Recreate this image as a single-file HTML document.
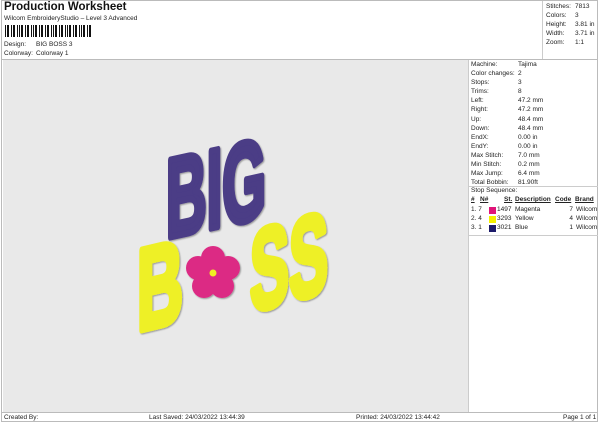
<!DOCTYPE html>
<html><head><style>
body{margin:0;width:600px;height:424px;background:#fff;font-family:"Liberation Sans",sans-serif;font-size:6.5px;color:#222;position:relative;overflow:hidden}
.a{position:absolute;white-space:nowrap}
.r{position:absolute;line-height:9.1px;white-space:nowrap}
</style></head><body>
<div class="a" style="left:1px;top:0;width:597px;height:422px;border:1px solid #bbb;box-sizing:border-box"></div>
<div class="a" style="left:4px;top:1px;font-size:11.5px;font-weight:bold;color:#111">Production Worksheet</div>
<div class="a" style="left:4px;top:15px">Wilcom EmbroideryStudio – Level 3 Advanced</div>
<svg class="a" style="left:5px;top:25px" width="86" height="12"><g fill="#111">
<rect x="0" y="0" width="1" height="12"/><rect x="2" width="2" height="12"/><rect x="6" width="1" height="12"/><rect x="8" width="2" height="12"/><rect x="12" width="1" height="12"/><rect x="14" width="1" height="12"/><rect x="16" width="2" height="12"/><rect x="20" width="1" height="12"/><rect x="22" width="2" height="12"/><rect x="26" width="1" height="12"/><rect x="28" width="1" height="12"/><rect x="30" width="2" height="12"/><rect x="34" width="1" height="12"/><rect x="36" width="2" height="12"/><rect x="40" width="1" height="12"/><rect x="42" width="2" height="12"/><rect x="46" width="1" height="12"/><rect x="48" width="1" height="12"/><rect x="50" width="2" height="12"/><rect x="54" width="1" height="12"/><rect x="56" width="2" height="12"/><rect x="60" width="1" height="12"/><rect x="62" width="1" height="12"/><rect x="64" width="2" height="12"/><rect x="68" width="1" height="12"/><rect x="70" width="2" height="12"/><rect x="74" width="1" height="12"/><rect x="76" width="1" height="12"/><rect x="78" width="2" height="12"/><rect x="82" width="1" height="12"/><rect x="84" width="2" height="12"/></g></svg>
<div class="a" style="left:4px;top:41px">Design:</div><div class="a" style="left:36px;top:41px">BIG BOSS 3</div>
<div class="a" style="left:4px;top:50px">Colorway:</div><div class="a" style="left:36px;top:50px">Colorway 1</div>
<div class="a" style="left:542px;top:1px;width:1px;height:58px;background:#ccc"></div>
<div class="r" style="left:546px;top:2px">Stitches:<br>Colors:<br>Height:<br>Width:<br>Zoom:</div>
<div class="r" style="left:575px;top:2px">7813<br>3<br>3.81 in<br>3.71 in<br>1:1</div>
<div class="a" style="left:2px;top:59px;width:596px;height:1px;background:#bbb"></div>
<div class="a" style="left:3px;top:60px;width:465px;height:352px;background:#e9e9e9"></div>
<div class="a" style="left:468px;top:60px;width:1px;height:352px;background:#ccc"></div>
<div class="r" style="left:471px;top:60px">Machine:<br>Color changes:<br>Stops:<br>Trims:<br>Left:<br>Right:<br>Up:<br>Down:<br>EndX:<br>EndY:<br>Max Stitch:<br>Min Stitch:<br>Max Jump:<br>Total Bobbin:</div>
<div class="r" style="left:518px;top:60px">Tajima<br>2<br>3<br>8<br>47.2 mm<br>47.2 mm<br>48.4 mm<br>48.4 mm<br>0.00 in<br>0.00 in<br>7.0 mm<br>0.2 mm<br>6.4 mm<br>81.90ft</div>
<div class="a" style="left:469px;top:186px;width:129px;height:1px;background:#ccc"></div>
<div class="a" style="left:471px;top:187px">Stop Sequence:</div>
<div class="a" style="left:471px;top:196px;font-weight:bold;text-decoration:underline">#</div>
<div class="a" style="left:480px;top:196px;font-weight:bold;text-decoration:underline">N#</div>
<div class="a" style="left:504px;top:196px;font-weight:bold;text-decoration:underline">St.</div>
<div class="a" style="left:515px;top:196px;font-weight:bold;text-decoration:underline">Description</div>
<div class="a" style="left:555px;top:196px;font-weight:bold;text-decoration:underline">Code</div>
<div class="a" style="left:575px;top:196px;font-weight:bold;text-decoration:underline">Brand</div>
<div class="r" style="left:471px;top:205px">1. 7<br>2. 4<br>3. 1</div>
<div class="a" style="left:489px;top:207px;width:7px;height:7px;background:#e0147a"></div>
<div class="a" style="left:489px;top:216px;width:7px;height:7px;background:#f4f000"></div>
<div class="a" style="left:489px;top:225px;width:7px;height:7px;background:#1c1a6a"></div>
<div class="r" style="left:497px;top:205px">1497<br>3293<br>3021</div>
<div class="r" style="left:515px;top:205px">Magenta<br>Yellow<br>Blue</div>
<div class="r" style="left:563px;top:205px;text-align:right;width:10px">7<br>4<br>1</div>
<div class="r" style="left:576px;top:205px">Wilcom<br>Wilcom<br>Wilcom</div>
<div class="a" style="left:469px;top:235px;width:129px;height:1px;background:#ccc"></div>
<div class="a" style="left:2px;top:412px;width:596px;height:1px;background:#bbb"></div>
<div class="a" style="left:4px;top:414px">Created By:</div>
<div class="a" style="left:149px;top:414px">Last Saved: 24/03/2022 13:44:39</div>
<div class="a" style="left:356px;top:414px">Printed: 24/03/2022 13:44:42</div>
<div class="a" style="left:563px;top:414px">Page 1 of 1</div>
<svg class="a" style="left:0;top:0" width="468" height="412">
<defs><filter id="s"><feDropShadow dx="1" dy="1" stdDeviation="0.8" flood-opacity="0.35"/></filter></defs>
<g filter="url(#s)" font-family="Liberation Sans" font-weight="bold" stroke-linejoin="round">
<text transform="matrix(1,-0.22,0,1,166,238)" font-size="112" fill="#4b3c86" stroke="#4b3c86" stroke-width="7" textLength="100" lengthAdjust="spacingAndGlyphs">BIG</text>
<text transform="matrix(1,-0.24,0,1,137,331)" font-size="116" fill="#eef028" stroke="#eef028" stroke-width="7" textLength="46" lengthAdjust="spacingAndGlyphs">B</text>
<text transform="matrix(1,-0.28,0,1,250,312)" font-size="114" fill="#eef028" stroke="#eef028" stroke-width="7" textLength="78" lengthAdjust="spacingAndGlyphs">SS</text>
<g transform="translate(213,273)" fill="#dc2a84">
<circle cx="0" cy="-15" r="12"/><circle cx="15" cy="-5" r="12"/><circle cx="9" cy="13" r="12"/><circle cx="-9" cy="13" r="12"/><circle cx="-15" cy="-5" r="12"/><circle r="10"/>
<circle r="3.5" fill="#f0f020"/></g>
</g></svg>
</body></html>
